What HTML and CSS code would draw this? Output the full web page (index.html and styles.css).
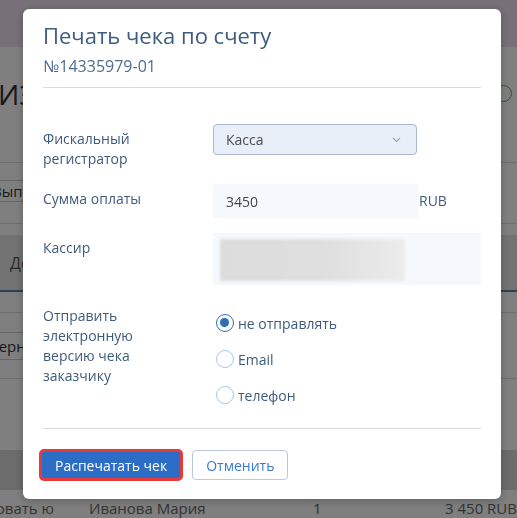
FILE: index.html
```html
<!DOCTYPE html>
<html lang="ru">
<head>
  <meta charset="UTF-8" />
  <meta name="viewport" content="width=device-width, initial-scale=1.0"/>
  <title>Печать чека</title>
  <link rel="stylesheet" href="styles.css">
</head>
<body>
  <!-- page behind the dialog -->
  <div class="page">
    <div class="topbar"></div>
    <div class="page-head">
      <h2 class="page-title">ИЗ-14335979</h2>
      <span class="status-dot"></span>
    </div>
    <div class="toolbar">
      <button class="page-btn page-btn--first">Выпустить</button>
    </div>
    <div class="tabs"><span class="tab">Документы</span></div>
    <div class="toolbar toolbar--second">
      <button class="page-btn page-btn--second">Вернуть</button>
    </div>
    <div class="table-head"></div>
    <div class="table-row">
      <div class="cell cell-first"><span>Забронировать ю</span></div>
      <div class="cell cell-name">Иванова Мария</div>
      <div class="cell cell-qty">1</div>
      <div class="cell cell-sum">3 450 RUB</div>
    </div>
  </div>

  <div class="backdrop"></div>

  <div class="modal">
    <div class="modal-header">
      <h1 class="modal-title">Печать чека по счету</h1>
      <div class="modal-subtitle">№14335979-01</div>
    </div>

    <div class="modal-body">
      <div class="form-row">
        <div class="form-label">Фискальный регистратор</div>
        <div class="select">
          <span>Касса</span>
          <svg class="chevron" width="9" height="6" viewBox="0 0 9 6"><polyline points="1,1 4.5,4.5 8,1" fill="none" stroke="#9aa3ad" stroke-width="1.1"/></svg>
        </div>
      </div>

      <div class="form-row form-row--sum">
        <div class="form-label">Сумма оплаты</div>
        <div class="input">3450</div>
        <span class="currency">RUB</span>
      </div>

      <div class="form-row form-row--cashier">
        <div class="form-label">Кассир</div>
        <div class="cashier-box"><div class="cashier-blur"></div></div>
      </div>

      <div class="form-row form-row--send">
        <div class="form-label">Отправить электронную версию чека заказчику</div>
        <div class="radio-list">
          <label class="radio"><span class="radio-mark radio-mark--on"></span>не отправлять</label>
          <label class="radio"><span class="radio-mark"></span>Email</label>
          <label class="radio"><span class="radio-mark"></span>телефон</label>
        </div>
      </div>
    </div>

    <div class="modal-footer">
      <button class="btn btn-primary">Распечатать чек</button>
      <button class="btn btn-cancel">Отменить</button>
    </div>
  </div>
</body>
</html>
```

FILE: styles.css
```css
body { font-family: "Open Sans", "Noto Sans", sans-serif; background: #fff; margin: 0; color: #333; overflow: hidden; }

/* page under the overlay */
.page { width: 517px; height: 518px; overflow: hidden; }
.topbar { height: 47px; background: #f0e0f2; }
.page-head { height: 115px; border-bottom: 1px solid #ddd; display: flex; justify-content: space-between; align-items: flex-start; }
.page-title { margin: 28px 0 0 -2px; font-size: 28px; font-weight: 400; color: #333; white-space: nowrap; }
.status-dot { width: 17px; height: 17px; box-sizing: border-box; border: 1.5px solid #4caf50; border-radius: 50%; margin: 38px 5px 0 0; }
.toolbar { height: 60px; border-bottom: 1px solid #ddd; display: flex; align-items: center; }
.page-btn { font-family: inherit; font-size: 15px; color: #333; background: #fff; border: 1px solid #ccc; border-radius: 3px; height: 22px; padding: 0 10px; }
.page-btn--first { margin-left: -19px; margin-top: -4px; }
.tabs { height: 55px; margin-top: 11px; background: #e6e6e6; border-bottom: 2px solid #5a7fae; display: flex; align-items: center; }
.tab { margin-left: 10px; font-size: 16px; color: #555; }
.toolbar--second { height: 65px; margin-top: 20px; border-top: 1px solid #ddd; }
.page-btn--second { margin-left: -22px; height: 28px; }
.table-head { height: 40px; margin-top: 71px; background: #d8d8d8; }
.table-row { display: flex; font-size: 15px; color: #666; padding-top: 8px; white-space: nowrap; }
.cell-first { width: 54px; display: flex; justify-content: flex-end; overflow: hidden; }
.cell-name { margin-left: 35px; width: 224px; }
.cell-qty { width: 132px; }

.backdrop { position: fixed; top: 0; left: 0; right: 0; bottom: 0; background: rgba(0,0,0,0.5); }

/* dialog */
.modal { position: fixed; left: 23px; top: 9px; width: 478px; background: #fff; border-radius: 6px; box-shadow: 0 2px 8px rgba(0,0,0,0.25); padding: 12px 20px 18px; box-sizing: border-box; }
.modal-header { border-bottom: 1px solid #dcdcdc; padding-bottom: 10px; }
.modal-title { margin: 0; font-size: 22px; line-height: 28px; font-weight: 400; color: #3e5c7e; }
.modal-subtitle { margin-top: 6px; font-size: 16px; line-height: 22px; color: #4f6d8f; }

.modal-body { padding-top: 36px; padding-bottom: 24px; border-bottom: 1px solid #dcdcdc; }
.form-row { display: flex; align-items: flex-start; }
.form-label { width: 170px; padding-right: 30px; padding-top: 5px; box-sizing: border-box; font-size: 14px; line-height: 20px; color: #3f5b7c; }
.form-row--sum { margin-top: 15px; }
.form-row--cashier { margin-top: 15px; }
.form-row--send { margin-top: 16px; }

.select { width: 204px; height: 31px; box-sizing: border-box; background: #e9eff9; border: 1px solid #aab7c9; border-radius: 4px; padding: 0 15px 0 12px; display: flex; align-items: center; justify-content: space-between; font-size: 14px; color: #4c4c4c; }
.input { width: 205px; height: 34px; box-sizing: border-box; background: #f5f8fc; padding-left: 13px; display: flex; align-items: center; font-size: 14px; color: #444; }
.currency { font-size: 14px; line-height: 34px; color: #3f5b7c; margin-left: 1px; }
.cashier-box { width: 268px; height: 52px; box-sizing: border-box; background: #f5f8fc; padding: 6px 7px; }
.cashier-blur { width: 185px; height: 42px; background: linear-gradient(90deg, #dcdcdc 0%, #dedede 55%, #ececec 100%); filter: blur(1.5px); }

.radio-list { display: flex; flex-direction: column; gap: 18px; padding-top: 13px; margin-left: 3px; }
.radio { display: flex; align-items: center; height: 18px; font-size: 14px; color: #3f5b7c; }
.radio-mark { width: 18px; height: 18px; box-sizing: border-box; border: 1px solid #a9c8e8; border-radius: 50%; margin-right: 4px; position: relative; }
.radio-mark--on { border: 1.5px solid #2f6fb5; }
.radio-mark--on::after { content: ""; position: absolute; left: 3px; top: 3px; width: 9px; height: 9px; border-radius: 50%; background: #2f6fb5; }

.modal-footer { padding-top: 20px; display: flex; align-items: center; gap: 9px; }
.btn { font-family: inherit; font-size: 14px; border-radius: 4px; cursor: pointer; box-sizing: border-box; }
.btn-primary { height: 32px; margin-left: -4px; padding: 0 13px; background: #2c6ec6; color: #fff; border: 3px solid #e8393c; border-radius: 5px; }
.btn-cancel { height: 30px; padding: 0 13px; background: #fff; color: #3b7ad0; border: 1px solid #b9c8db; }
```
